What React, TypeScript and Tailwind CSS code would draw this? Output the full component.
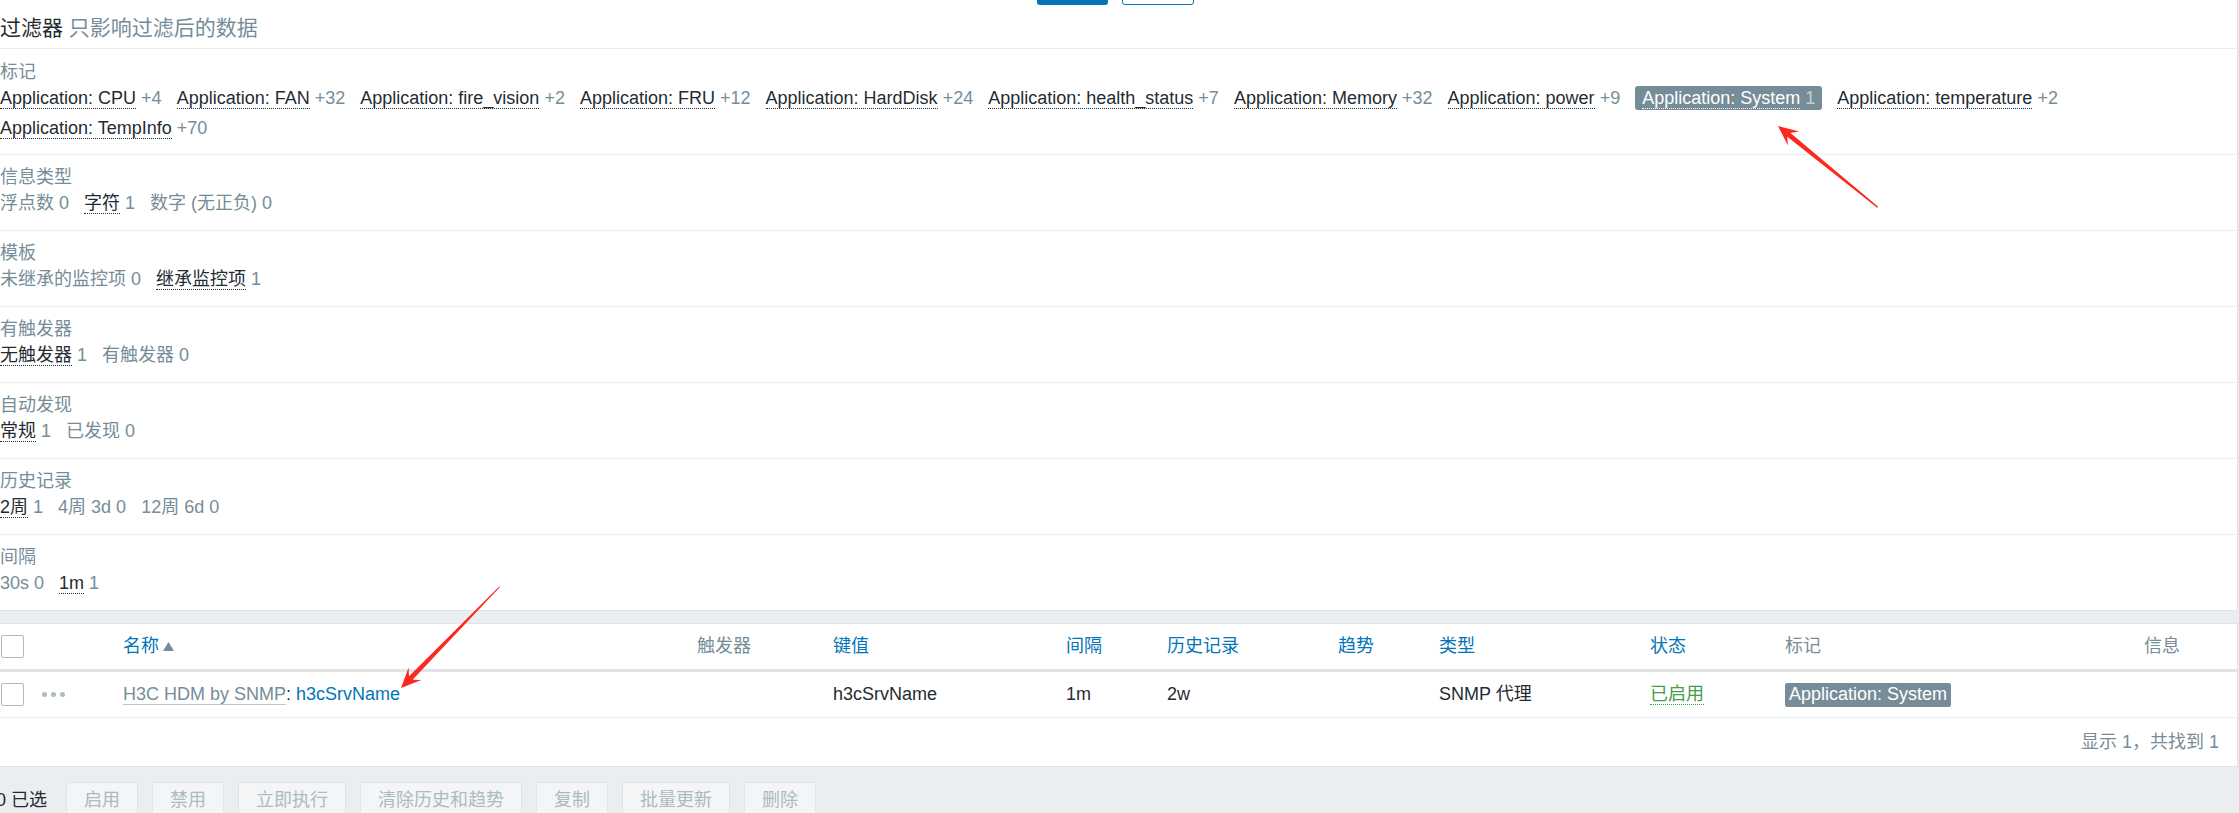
import React from 'react'

type Item = { label: string; count: string; active?: boolean; selected?: boolean }

const tags: Item[] = [
  { label: 'Application: CPU', count: '+4', active: true },
  { label: 'Application: FAN', count: '+32', active: true },
  { label: 'Application: fire_vision', count: '+2', active: true },
  { label: 'Application: FRU', count: '+12', active: true },
  { label: 'Application: HardDisk', count: '+24', active: true },
  { label: 'Application: health_status', count: '+7', active: true },
  { label: 'Application: Memory', count: '+32', active: true },
  { label: 'Application: power', count: '+9', active: true },
  { label: 'Application: System', count: '1', selected: true },
  { label: 'Application: temperature', count: '+2', active: true },
  { label: 'Application: TempInfo', count: '+70', active: true },
]

const sections: { title: string; items: Item[] }[] = [
  {
    title: '信息类型',
    items: [
      { label: '浮点数', count: '0' },
      { label: '字符', count: '1', active: true },
      { label: '数字 (无正负)', count: '0' },
    ],
  },
  {
    title: '模板',
    items: [
      { label: '未继承的监控项', count: '0' },
      { label: '继承监控项', count: '1', active: true },
    ],
  },
  {
    title: '有触发器',
    items: [
      { label: '无触发器', count: '1', active: true },
      { label: '有触发器', count: '0' },
    ],
  },
  {
    title: '自动发现',
    items: [
      { label: '常规', count: '1', active: true },
      { label: '已发现', count: '0' },
    ],
  },
  {
    title: '历史记录',
    items: [
      { label: '2周', count: '1', active: true },
      { label: '4周 3d', count: '0' },
      { label: '12周 6d', count: '0' },
    ],
  },
  {
    title: '间隔',
    items: [
      { label: '30s', count: '0' },
      { label: '1m', count: '1', active: true },
    ],
  },
]

const columns = [
  { title: '', w: 'w-[42px]' },
  { title: '', w: 'w-[81px]' },
  { title: '名称', w: 'w-[574px]', sort: true },
  { title: '触发器', w: 'w-[136px]' },
  { title: '键值', w: 'w-[233px]', sort: true },
  { title: '间隔', w: 'w-[101px]', sort: true },
  { title: '历史记录', w: 'w-[171px]', sort: true },
  { title: '趋势', w: 'w-[101px]', sort: true },
  { title: '类型', w: 'w-[211px]', sort: true },
  { title: '状态', w: 'w-[135px]', sort: true },
  { title: '标记', w: 'w-[359px]' },
  { title: '信息', w: 'w-[93px]' },
]

function SubItem({ item }: { item: Item }) {
  if (item.selected) {
    return (
      <span className="flex h-[24px] items-center rounded-[3px] bg-[#768d99] px-[7px] leading-[24px] text-white">
        <span className="border-b border-dotted border-white leading-[20px]">{item.label}</span>
        <span className="ml-[5px] text-[#c3cdd3]">{item.count}</span>
      </span>
    )
  }
  if (item.active) {
    return (
      <span className="whitespace-nowrap">
        <span className="border-b border-dotted border-[#1f2c33] text-[#1f2c33]">{item.label}</span>
        <span className="text-[#768d99]"> {item.count}</span>
      </span>
    )
  }
  return (
    <span className="whitespace-nowrap text-[#768d99]">
      {item.label} {item.count}
    </span>
  )
}

function Checkbox() {
  return <div className="ml-[1px] h-[23px] w-[23px] rounded-[2px] border border-[#acbbc2] bg-white" />
}

function Arrows() {
  return (
    <svg className="pointer-events-none absolute left-0 top-0" width="2239" height="813" viewBox="0 0 2239 813">
      <polygon
        fill="#fa2a20"
        points="1878,207.5 1877.6,206.2 1790.5,132.9 1799.2,131.6 1778,126 1787.9,145.6 1787.3,136.7 1877.2,207.8"
      />
      <polygon
        fill="#fa2a20"
        points="500,587 412.6,679.8 421.4,680 401,688 408.6,667.4 409,676.3 499.2,586.4"
      />
    </svg>
  )
}

export default function App() {
  return (
    <div className="relative h-[813px] w-[2239px] overflow-hidden bg-[#ebeef0] font-['Liberation_Sans','Noto_Sans_CJK_SC',sans-serif] text-[18px] text-[#1f2c33]">
      {/* filter */}
      <div className="w-[2238px] border-b border-r border-[#dfe4e7] bg-white">
        <div className="flex h-[5px] items-end justify-center gap-[14px] overflow-hidden pr-[6px]">
          <div className="h-[30px] w-[71px] shrink-0 rounded-[3px] bg-[#0275b8]" />
          <div className="h-[30px] w-[72px] shrink-0 rounded-[3px] border border-[#0275b8] bg-white" />
        </div>
        <div className="border-b border-[#ebeef0] pb-[8px] pt-[11px] text-[21px] leading-[24px]">
          过滤器 <span className="text-[#768d99]">只影响过滤后的数据</span>
        </div>

        <div className="border-b border-[#ebeef0] pb-[11px] pt-[12px]">
          <div className="h-[22px] leading-[22px] text-[#768d99]">标记</div>
          <div className="flex flex-wrap items-center gap-x-[15px] pr-[10px]">
            {tags.map((t) => (
              <div key={t.label} className="flex h-[30px] items-center leading-[30px]">
                <SubItem item={t} />
              </div>
            ))}
          </div>
        </div>

        {sections.map((s, i) => (
          <div
            key={s.title}
            className={
              i < sections.length - 1
                ? 'border-b border-[#ebeef0] pb-[12px] pt-[11px]'
                : 'pb-[12px] pt-[11px]'
            }
          >
            <div className="h-[22px] leading-[22px] text-[#768d99]">{s.title}</div>
            <div className="flex h-[30px] items-center gap-x-[15px] leading-[30px]">
              {s.items.map((it) => (
                <SubItem key={it.label} item={it} />
              ))}
            </div>
          </div>
        ))}
      </div>

      {/* table */}
      <div className="mt-[12px] w-[2238px] border-b border-r border-t border-[#dfe4e7] bg-white">
        <div className="flex h-[48px] items-center border-b-[3px] border-[#dfe4e7]">
          {columns.map((c, i) => (
            <div key={i} className={`${c.w} flex shrink-0 items-center`}>
              {i === 0 && <Checkbox />}
              {c.title && (
                <span className={c.sort ? 'text-[#0275b8]' : 'text-[#768d99]'}>{c.title}</span>
              )}
              {c.title === '名称' && (
                <svg className="ml-[4px]" width="11" height="9" viewBox="0 0 11 9">
                  <polygon points="5.5,0 11,9 0,9" fill="#768d99" />
                </svg>
              )}
            </div>
          ))}
        </div>

        <div className="flex h-[46px] items-center border-b border-[#ebeef0]">
          <div className="flex w-[42px] shrink-0 items-center">
            <Checkbox />
          </div>
          <div className="flex w-[81px] shrink-0 items-center gap-[4px]">
            <span className="h-[5px] w-[5px] rounded-full bg-[#acbbc2]" />
            <span className="h-[5px] w-[5px] rounded-full bg-[#acbbc2]" />
            <span className="h-[5px] w-[5px] rounded-full bg-[#acbbc2]" />
          </div>
          <div className="w-[574px] shrink-0 whitespace-nowrap">
            <span className="border-b border-[#768d99]/50 text-[#768d99]">H3C HDM by SNMP</span>
            <span>: </span>
            <span className="text-[#0275b8]">h3cSrvName</span>
          </div>
          <div className="w-[136px] shrink-0" />
          <div className="w-[233px] shrink-0">h3cSrvName</div>
          <div className="w-[101px] shrink-0">1m</div>
          <div className="w-[171px] shrink-0">2w</div>
          <div className="w-[101px] shrink-0" />
          <div className="w-[211px] shrink-0">SNMP 代理</div>
          <div className="w-[135px] shrink-0">
            <span className="border-b border-dotted border-[#429e47] text-[#429e47]">已启用</span>
          </div>
          <div className="w-[359px] shrink-0">
            <span className="inline-flex h-[24px] items-center rounded-[2px] bg-[#768d99] px-[4px] text-white">
              Application: System
            </span>
          </div>
          <div className="w-[93px] shrink-0" />
        </div>

        <div className="flex h-[48px] items-center justify-end pr-[18px] text-[#768d99]">显示 1，共找到 1</div>
      </div>

      {/* actions */}
      <div className="mt-[15px] flex h-[36px] items-center">
        <span className="ml-[-4px] w-[70px] shrink-0 whitespace-nowrap">0 已选</span>
        <div className="flex gap-[14px]">
          {['启用', '禁用', '立即执行', '清除历史和趋势', '复制', '批量更新', '删除'].map((b) => (
            <button
              key={b}
              className="h-[36px] rounded-[3px] border border-[#dfe4e7] bg-[#f3f5f6] px-[17px] text-[#acbbc2]"
            >
              {b}
            </button>
          ))}
        </div>
      </div>

      <Arrows />
    </div>
  )
}
